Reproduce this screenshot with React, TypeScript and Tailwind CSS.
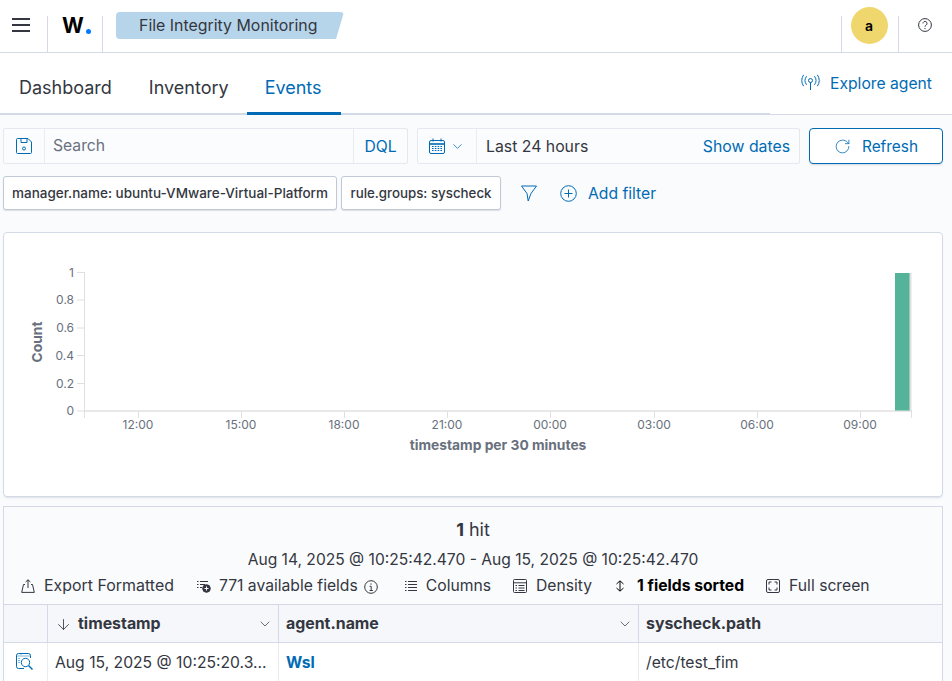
import React from 'react';
import { ChevronDown, ArrowDown, RotateCw } from 'lucide-react';

const blue = 'text-[#006bb4]';

const Hamburger = () => (
  <svg width="18" height="14" viewBox="0 0 18 14" className="text-[#343741]">
    <path d="M0 1h18M0 7h18M0 13h18" stroke="currentColor" strokeWidth="2" />
  </svg>
);

const SaveIcon = () => (
  <svg width="16" height="16" viewBox="0 0 16 16" fill="none" stroke="#006bb4" strokeWidth="1">
    <path d="M.5 1.5a1 1 0 0 1 1-1h10.5l3.5 3.5v10.5a1 1 0 0 1-1 1h-13a1 1 0 0 1-1-1z" />
    <path d="M5 .5v4h6v-4" />
    <circle cx="8" cy="10.5" r="1.5" />
  </svg>
);

const CalendarIcon = () => (
  <svg width="16" height="16" viewBox="0 0 16 16" fill="none" stroke="#006bb4" strokeWidth="1">
    <rect x=".5" y="2.5" width="15" height="13" rx="1.5" />
    <path d="M.5 6h15" strokeWidth="1.6" />
    <path d="M4 .5v3M12 .5v3" />
    <path d="M3 8.5h10M3 10.5h10M3 12.5h10" strokeDasharray="1.6 1.2" strokeWidth="1.2" />
  </svg>
);

const FilterIcon = () => (
  <svg width="16" height="17" viewBox="0 0 16 17" fill="none" stroke="#006bb4" strokeWidth="1" strokeLinejoin="round">
    <path d="M.5 1h15L10 8.5 7.2 16 6 8.5z" />
  </svg>
);

const PlusCircle = () => (
  <svg width="17" height="17" viewBox="0 0 17 17" fill="none" stroke="#006bb4" strokeWidth="1">
    <circle cx="8.5" cy="8.5" r="7.8" />
    <path d="M8.5 4.5v8M4.5 8.5h8" />
  </svg>
);

const AntennaIcon = () => (
  <svg width="19" height="17" viewBox="0 0 19 17" fill="none" stroke="#006bb4" strokeWidth="1">
    <circle cx="9.5" cy="6.5" r="2" />
    <path d="M9.5 8.5V16" />
    <path d="M5.6 2.2a7 7 0 0 0 0 8.6M13.4 2.2a7 7 0 0 1 0 8.6" />
    <path d="M2.6.8a10.5 10.5 0 0 0 0 11.4M16.4.8a10.5 10.5 0 0 1 0 11.4" />
  </svg>
);

const HelpIcon = () => (
  <svg width="14" height="14" viewBox="0 0 14 14" fill="none" stroke="#343741" strokeWidth="1">
    <circle cx="7" cy="7" r="6.4" />
    <path d="M5 5.4a2 2 0 1 1 3.2 1.6c-.8.5-1.2.9-1.2 1.7" />
    <path d="M7 10v1" />
  </svg>
);

const ExportIcon = () => (
  <svg width="14" height="14" viewBox="0 0 14 14" fill="none" stroke="#343741" strokeWidth="1">
    <path d="M4 5.5H2.5L.7 13.4h12.6L11.5 5.5H10" />
    <path d="M7 9V.8M4.6 3 7 .8 9.4 3" />
  </svg>
);

const FieldsIcon = () => (
  <svg width="14" height="14" viewBox="0 0 14 14" fill="none" stroke="#343741">
    <path d="M0 2.5h1.5M3 2.5h8M0 5.5h1.5M3 5.5h5M0 8.5h1.5M3 8.5h2" strokeWidth="1" />
    <circle cx="9.5" cy="9.5" r="3.8" fill="#343741" />
    <path d="M9.5 7.5v4M7.5 9.5h4" stroke="#fafbfd" strokeWidth="1" />
  </svg>
);

const InfoIcon = () => (
  <svg width="14" height="14" viewBox="0 0 14 14" fill="none" stroke="#343741" strokeWidth="1" className="ml-[6px] mt-[2px]">
    <circle cx="7" cy="7" r="6.3" />
    <path d="M5.6 6.3H7.2V10.4M5.6 10.5h3.2M7 3.4v1.3" />
  </svg>
);

const ColumnsIcon = () => (
  <svg width="12" height="12" viewBox="0 0 12 12" fill="none" stroke="#343741" strokeWidth="1">
    <path d="M0 1.5h1.5M3 1.5h9M0 4.5h1.5M3 4.5h9M0 7.5h1.5M3 7.5h9M0 10.5h1.5M3 10.5h9" />
  </svg>
);

const DensityIcon = () => (
  <svg width="14" height="14" viewBox="0 0 14 14" fill="none" stroke="#343741" strokeWidth="1">
    <rect x=".5" y=".5" width="13" height="13" rx="1" />
    <path d="M.5 3.8h13M2.5 6.5h1.5M5.5 6.5h6M2.5 9h1.5M5.5 9h6M2.5 11.5h1.5M5.5 11.5h6" />
  </svg>
);

const SortIcon = () => (
  <svg width="10" height="12" viewBox="0 0 10 12" fill="none" stroke="#000" strokeWidth="1">
    <path d="M1.5 4 5 .8 8.5 4M1.5 8 5 11.2 8.5 8M5 1v10" />
  </svg>
);

const FullScreenIcon = () => (
  <svg width="14" height="14" viewBox="0 0 14 14" fill="none" stroke="#343741" strokeWidth="1">
    <rect x=".5" y=".5" width="13" height="13" rx="1.5" />
    <path d="M3 5.5V3h2.5M8.5 3H11v2.5M11 8.5V11H8.5M5.5 11H3V8.5" />
  </svg>
);

const InspectIcon = () => (
  <svg width="18" height="17" viewBox="0 0 18 17" fill="none" stroke="#006bb4" strokeWidth="1">
    <path d="M8 15.5H2.5a2 2 0 0 1-2-2v-11a2 2 0 0 1 2-2h10a2 2 0 0 1 2 2V5" />
    <path d="M.5 3h14M3 5v5M5 .5v1" strokeDasharray="1 1" />
    <circle cx="9.5" cy="9.5" r="4.2" />
    <path d="m12.5 12.5 4 4" strokeWidth="1.4" />
  </svg>
);

const Chart = () => {
  const yTicks = [
    { label: '1', y: 272.5 },
    { label: '0.8', y: 300 },
    { label: '0.6', y: 328 },
    { label: '0.4', y: 355.5 },
    { label: '0.2', y: 383.5 },
    { label: '0', y: 411 },
  ];
  const xTicks = [
    { label: '12:00', x: 138 },
    { label: '15:00', x: 241 },
    { label: '18:00', x: 344 },
    { label: '21:00', x: 447 },
    { label: '00:00', x: 550 },
    { label: '03:00', x: 654 },
    { label: '06:00', x: 757 },
    { label: '09:00', x: 860 },
  ];
  return (
    <svg width="938" height="263" viewBox="4 233 938 263" className="block">
      <g stroke="#e0e0e0">
        <path d="M84.5 272v139" strokeWidth="1" />
        <path d="M84 411h828" strokeWidth="1.5" />
        {yTicks.map((t) => (
          <path key={t.label} d={`M77 ${t.y}h7`} />
        ))}
        {xTicks.map((t) => (
          <path key={t.label} d={`M${t.x}.5 411v7`} />
        ))}
        <path d="M84.5 411v7M911.5 411v7" />
      </g>
      <rect x="909" y="273" width="2.5" height="138" fill="#e0e0e0" />
      <rect x="895" y="273" width="14.5" height="137.5" fill="#54b399" />
      <g fontSize="12" fill="#69707d" fontFamily="Inter, sans-serif">
        {yTicks.map((t) => (
          <text key={t.label} x="74" y={t.y + 4} textAnchor="end">
            {t.label}
          </text>
        ))}
        {xTicks.map((t) => (
          <text key={t.label} x={t.x} y="429" textAnchor="middle">
            {t.label}
          </text>
        ))}
      </g>
      <text x="498" y="450" textAnchor="middle" fontSize="13.8" fontWeight="700" fill="#69707d" fontFamily="Inter, sans-serif">
        timestamp per 30 minutes
      </text>
      <text
        x="0"
        y="0"
        transform="translate(41.5 342) rotate(-90)"
        textAnchor="middle"
        fontSize="13.8"
        fontWeight="700"
        fill="#69707d"
        fontFamily="Inter, sans-serif"
      >
        Count
      </text>
    </svg>
  );
};

export default function App() {
  return (
    <div className="w-[952px] h-[681px] overflow-hidden bg-[#fafbfd] text-[#343741] font-['Inter',sans-serif]">
      {/* top bar */}
      <div className="h-[53px] bg-white border-b border-[#d3dae6] flex items-stretch">
        <div className="w-[47px] flex items-start justify-center pt-[18px] pr-[6px]">
          <Hamburger />
        </div>
        <div className="mt-4 w-14 border-x border-[#d3dae6] flex items-start pl-[14px]">
          <span className="text-[21px] leading-none font-bold text-black mt-[-1px]">W</span>
          <span className="ml-[2px] mt-[13px] w-[5px] h-[5px] rounded-full bg-[#0079ff]" />
        </div>
        <div className="ml-[13px] mt-3 h-[27px] w-[228px] bg-[#b7d5ea] rounded-[4px] flex items-center pl-[23px] pt-[1px] text-[15.9px] text-[#343741] whitespace-nowrap [clip-path:polygon(0_0,100%_0,96.5%_100%,0_100%)]">
          File Integrity Monitoring
        </div>
        <div className="ml-auto mt-4 w-[58px] border-x border-[#d3dae6] flex justify-center">
          <div className="-mt-[9px] mr-[2px] w-[37px] h-[37px] rounded-full bg-[#efd76e] flex items-center justify-center text-sm font-semibold text-black">
            a
          </div>
        </div>
        <div className="w-[53px] flex items-start justify-center pt-[18px] pr-[2px]">
          <HelpIcon />
        </div>
      </div>

      {/* tabs */}
      <div className="relative h-[62px] bg-white flex items-stretch pl-px">
        <div className="absolute bottom-0 left-0 right-0 h-px bg-[#d3dae6]" />
        <div className="absolute bottom-0 left-0 w-[770px] h-[2px] bg-[#d3dae6]" />
        <div className="px-[18px] flex items-center text-[18px] pt-[6px]">Dashboard</div>
        <div className="pl-[19px] pr-[18px] flex items-center text-[18px] pt-[6px]">Inventory</div>
        <div className={`relative px-[18px] w-[94px] flex items-center text-[18px] pt-[6px] ${blue}`}>
          Events
          <div className="absolute left-0 right-0 bottom-0 h-[3px] bg-[#006bb4]" />
        </div>
        <div className={`ml-auto pr-[20px] flex items-start pt-[19px] gap-[10px] text-[15.7px] ${blue}`}>
          <span className="mt-[2px]">
            <AntennaIcon />
          </span>
          Explore agent
        </div>
      </div>

      {/* search */}
      <div className="pl-[3px] pt-[13px] flex">
        <div className="w-[405px] h-9 bg-[#fbfcfd] border border-[#e4e8f0] rounded-[2px] flex items-stretch">
          <div className="w-[41px] border-r border-[#e9ecf3] flex items-center justify-center">
            <SaveIcon />
          </div>
          <div className="flex-1 flex items-center pl-2 text-[#69707d] text-[15.7px]">Search</div>
          <div className={`w-[54px] border-l border-[#e9ecf3] flex items-center justify-center pt-[1px] text-[15.7px] ${blue}`}>DQL</div>
        </div>
        <div className="ml-[9px] w-[383px] h-9 bg-[#fbfcfd] border border-[#e4e8f0] rounded-[2px] flex items-stretch">
          <div className="w-[59px] border-r border-[#e9ecf3] flex items-center pl-[11px] gap-[5px]">
            <CalendarIcon />
            <ChevronDown size={15} className={blue} strokeWidth={1.2} />
          </div>
          <div className="flex-1 flex items-center pl-[9px] pt-[1px] text-[15.8px]">Last 24 hours</div>
          <div className={`flex items-center pr-[9px] pt-[1px] text-[15.8px] ${blue}`}>Show dates</div>
        </div>
        <div className={`ml-[9px] w-[134px] h-9 bg-white border border-[#006bb4] rounded-[4px] shadow-[0_2px_2px_-1px_rgba(152,162,179,0.4)] flex items-center justify-center gap-[11px] pt-[1px] text-[15.4px] ${blue}`}>
          <RotateCw size={17} strokeWidth={1.1} />
          Refresh
        </div>
      </div>

      {/* filters */}
      <div className="pl-[3px] pt-3 flex items-center">
        <div className="w-[334px] h-[34px] bg-white border border-[#c2c9d6] rounded-[3px] shadow-[0_1px_1px_rgba(152,162,179,0.3)] flex items-center justify-center pt-[1px] text-[13.5px] font-medium whitespace-nowrap">
          manager.name: ubuntu-VMware-Virtual-Platform
        </div>
        <div className="ml-1 w-40 h-[34px] bg-white border border-[#c2c9d6] rounded-[3px] shadow-[0_1px_1px_rgba(152,162,179,0.3)] flex items-center justify-center pt-[1px] text-[13.3px] font-medium whitespace-nowrap">
          rule.groups: syscheck
        </div>
        <div className="ml-5">
          <FilterIcon />
        </div>
        <div className={`ml-[23px] flex items-center gap-[11px] pt-[1px] text-[15.7px] ${blue}`}>
          <PlusCircle />
          Add filter
        </div>
      </div>

      {/* chart panel */}
      <div className="ml-[3px] mt-[22px] w-[940px] h-[265px] bg-white border border-[#d3dae6] rounded-[4px] shadow-[0_2px_2px_-1px_rgba(152,162,179,0.3)]">
        <Chart />
      </div>

      {/* events table */}
      <div className="ml-[3px] mt-[9px] w-[940px] border-x border-t border-[#d3dae6]">
        <div className="h-[97px] flex flex-col items-center">
          <div className="mt-[13px] text-lg leading-5">
            <b className="font-bold">1</b> hit
          </div>
          <div className="mt-[10px] text-[15.6px] leading-5">Aug 14, 2025 @ 10:25:42.470 - Aug 15, 2025 @ 10:25:42.470</div>
          <div className="self-start mt-[6px] pl-[17px] flex items-center text-[15.7px] leading-5 whitespace-nowrap">
            <ExportIcon />
            <span className="ml-[9px] text-[15.95px]">Export Formatted</span>
            <span className="ml-[23px]">
              <FieldsIcon />
            </span>
            <span className="ml-2">771 available fields</span>
            <InfoIcon />
            <span className="ml-[27px]">
              <ColumnsIcon />
            </span>
            <span className="ml-[9px]">Columns</span>
            <span className="ml-[22px]">
              <DensityIcon />
            </span>
            <span className="ml-[9px]">Density</span>
            <span className="ml-[23px]">
              <SortIcon />
            </span>
            <span className="ml-3 font-bold text-black">1 fields sorted</span>
            <span className="ml-[22px]">
              <FullScreenIcon />
            </span>
            <span className="ml-[9px]">Full screen</span>
          </div>
        </div>
        <div className="h-[39px] bg-[#f5f7fa] border-y border-[#d3dae6] flex items-stretch text-[15.9px] font-bold">
          <div className="w-11 border-r border-[#d3dae6]" />
          <div className="w-[231px] border-r border-[#d3dae6] flex items-center pl-[7px] pr-[5px] pt-[1px]">
            <ArrowDown size={17} strokeWidth={1.2} />
            <span className="ml-[6px] flex-1">timestamp</span>
            <ChevronDown size={16} strokeWidth={1.1} />
          </div>
          <div className="w-[360px] border-r border-[#d3dae6] flex items-center pl-[7px] pr-[5px] pt-[1px]">
            <span className="flex-1">agent.name</span>
            <ChevronDown size={16} strokeWidth={1.1} />
          </div>
          <div className="flex-1 flex items-center pl-[7px] pt-[1px]">syscheck.path</div>
        </div>
        <div className="h-[39px] bg-white flex items-stretch text-[15.7px]">
          <div className="w-11 border-r border-[#e9edf3] flex items-center justify-center pb-[3px] pr-[2px]">
            <InspectIcon />
          </div>
          <div className="w-[231px] border-r border-[#e9edf3] flex items-center pl-[7px] whitespace-nowrap">Aug 15, 2025 @ 10:25:20.3...</div>
          <div className={`w-[360px] border-r border-[#e9edf3] flex items-center pl-[7px] font-bold ${blue}`}>Wsl</div>
          <div className="flex-1 flex items-center pl-[7px]">/etc/test_fim</div>
        </div>
      </div>
    </div>
  );
}
